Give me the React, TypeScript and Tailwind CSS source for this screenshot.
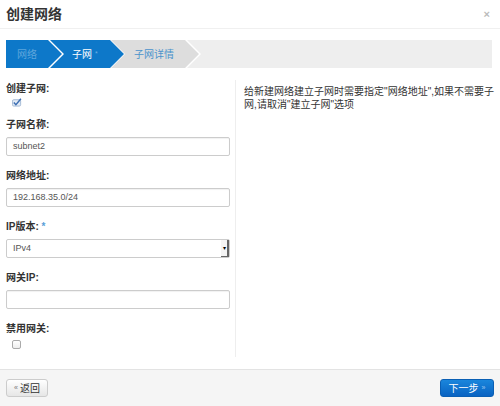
import React from "react";

const font = { fontFamily: '"Liberation Sans", "Noto Sans CJK SC", sans-serif' };

const Label = ({ children }: { children: React.ReactNode }) => (
  <div className="h-[12px] text-[10px] leading-[12px] font-bold text-[#333]">{children}</div>
);

const TextInput = ({ value }: { value?: string }) => (
  <div className="mt-[6px] h-[19px] w-[224px] border border-[#cccccc] rounded-[2px] bg-white shadow-[inset_0_1px_1px_rgba(0,0,0,0.06)] pl-[6px] text-[9px] leading-[17px] text-[#555]">
    {value}
  </div>
);

export default function App() {
  return (
    <div className="w-[500px] h-[406px] bg-white flex flex-col overflow-hidden" style={font}>
      {/* header */}
      <div className="h-[29px] flex items-center justify-between pl-[6px] pr-[10px] border-b border-[#f0f0f0]">
        <h3 className="text-[14px] font-bold text-[#333] leading-none">创建网络</h3>
        <span className="text-[11px] text-[#bbbbbb] font-bold leading-none">×</span>
      </div>

      {/* wizard steps */}
      <div className="mt-[11px] mx-[6px] w-[486px] h-[28px] flex bg-white">
        <div className="w-[56px] h-full bg-[#0d78c9] flex items-center pl-[11px] text-[10px] text-[#5ea6dc] [clip-path:polygon(0_0,calc(100%-14px)_0,100%_50%,calc(100%-14px)_100%,0_100%)]">
          网络
        </div>
        <div className="-ml-[12px] w-[74px] h-full bg-[#0d78c9] flex items-center pl-[22px] text-[10px] text-white [clip-path:polygon(0_0,calc(100%-14px)_0,100%_50%,calc(100%-14px)_100%,0_100%,14px_50%)]">
          子网<span className="ml-[3px] text-[7px] text-[#6fb0e3]">*</span>
        </div>
        <div className="-ml-[13px] w-[88px] h-full bg-[#dddddd] flex items-center pl-[23px] text-[10px] text-[#4b93cc] [clip-path:polygon(0_0,calc(100%-14px)_0,100%_50%,calc(100%-14px)_100%,0_100%,14px_50%)]">
          子网详情
        </div>
        <div className="-ml-[12px] flex-1 h-full bg-[#eeeeee] [clip-path:polygon(0_0,100%_0,100%_100%,0_100%,14px_50%)]" />
      </div>

      {/* body */}
      <div className="mt-[12px] flex px-[6px] flex-1">
        <div className="w-[231px] pt-[3px] border-r border-[#eeeeee] h-[277px]">
          <Label>创建子网:</Label>
          <div className="mt-[2px] ml-[6px] h-[10px] w-[10px] flex items-center justify-center">
            <svg width="11" height="10" viewBox="0 0 11 10">
              <rect x="0.5" y="2.5" width="9" height="7" rx="1.5" fill="#e3ebf5" stroke="#9fb6d3" />
              <path d="M2 5.5 L4.3 8 L9.8 1.5" fill="none" stroke="#3d6fb3" strokeWidth="1.6" />
            </svg>
          </div>
          <div className="mt-[12px]">
            <Label>子网名称:</Label>
            <TextInput value="subnet2" />
          </div>
          <div className="mt-[14px]">
            <Label>网络地址:</Label>
            <TextInput value="192.168.35.0/24" />
          </div>
          <div className="mt-[14px]">
            <Label>
              IP版本: <span className="text-[#5aa0d8]">*</span>
            </Label>
            <div className="mt-[6px] h-[19px] w-[224px] border border-[#cccccc] rounded-[2px] bg-white flex items-center justify-between pl-[6px] text-[9px] text-[#555]">
              <span>IPv4</span>
              <div className="h-[17px] w-[8px] flex items-center justify-center border-r-2 border-b border-[#666] bg-[#f4f4f4]">
                <span className="text-[6px] leading-none text-black">▾</span>
              </div>
            </div>
          </div>
          <div className="mt-[14px]">
            <Label>网关IP:</Label>
            <TextInput />
          </div>
          <div className="mt-[14px]">
            <Label>禁用网关:</Label>
            <div className="mt-[5px] ml-[6px] h-[9px] w-[9px] rounded-[2px] border border-[#aaaaaa] bg-gradient-to-b from-white to-[#eeeeee]" />
          </div>
        </div>
        <div className="flex-1 pl-[8px] pt-[5px] text-[10px] leading-[13px] text-[#333] whitespace-nowrap">
          给新建网络建立子网时需要指定"网络地址",如果不需要子
          <br />
          网,请取消"建立子网"选项
        </div>
      </div>

      {/* footer */}
      <div className="h-[37px] shrink-0 border-t border-[#e3e3e3] bg-[#f5f5f5] flex items-center justify-between px-[6px]">
        <button className="h-[18px] w-[42px] rounded-[3px] border border-[#cccccc] bg-gradient-to-b from-white to-[#e6e6e6] text-[10px] text-[#333] flex items-center justify-center gap-[2px]">
          <span className="text-[7px] text-[#777]">«</span>返回
        </button>
        <button className="h-[18px] w-[54px] rounded-[3px] border border-[#0a5fb4] bg-gradient-to-b from-[#1a86dc] to-[#0a63c2] text-[10px] text-white flex items-center justify-center gap-[3px]">
          下一步<span className="text-[7px] text-[#9fcbf0]">»</span>
        </button>
      </div>
    </div>
  );
}
